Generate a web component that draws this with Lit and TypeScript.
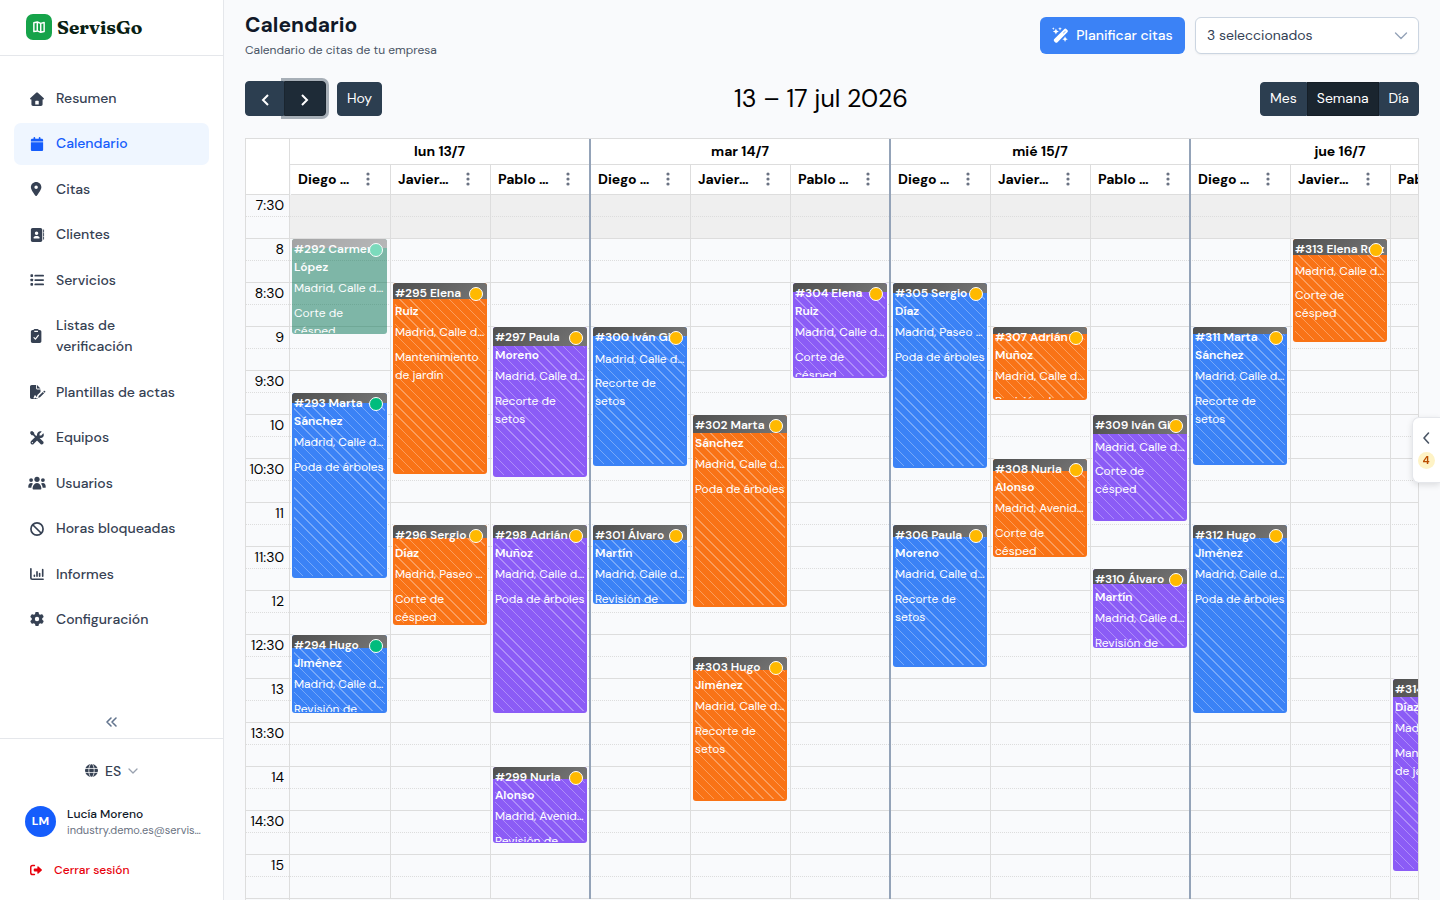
import { LitElement, html, css, svg } from "lit";
import { customElement, property } from "lit/decorators.js";
import { classMap } from "lit/directives/class-map.js";
import { styleMap } from "lit/directives/style-map.js";

const HOUSE = svg`<path d="M256 14c8 0 15 3 21 8l219 196c9 8 14 18 14 28 0 17-12 30-30 30h-20v172c0 36-24 60-60 60H112c-36 0-60-24-60-60V276H32c-18 0-30-13-30-30 0-10 5-20 14-28L235 22c6-5 13-8 21-8zM216 316c-14 0-24 10-24 24v118h128V340c0-14-10-24-24-24z" fill-rule="evenodd"/>`;
const CALENDAR = svg`<path d="M128 32v32H80c-26 0-48 22-48 48v48h448v-48c0-26-22-48-48-48h-48V32c0-18-14-32-32-32s-32 14-32 32v32H192V32c0-18-14-32-32-32s-32 14-32 32zM480 192H32v272c0 26 22 48 48 48h352c26 0 48-22 48-48z"/>`;
const PIN = svg`<path d="M247.7 499.2C299 435 416 279.4 416 192 416 86 330 0 224 0S32 86 32 192c0 87.4 117 243 168.3 307.2 12.3 15.3 35.1 15.3 47.4 0zM224 128a64 64 0 1 1 0 128 64 64 0 1 1 0-128z"/>`;
const BOOK = svg`<path d="M96 0C60.700 0 32 28.700 32 64v384c0 35.300 28.700 64 64 64h288c35.300 0 64-28.700 64-64V64c0-35.300-28.700-64-64-64zM208 288h64c44.200 0 80 35.800 80 80 0 8.800-7.200 16-16 16H144c-8.800 0-16-7.200-16-16 0-44.200 35.800-80 80-80zm-32-96a64 64 0 1 1 128 0 64 64 0 1 1-128 0z"/><path d="M496 72v80M496 200v80M496 328v80" fill="none" stroke="currentColor" stroke-width="32" stroke-linecap="round"/>`;
const LIST = svg`<rect x="16" y="48" width="96" height="96" rx="24"/><rect x="16" y="208" width="96" height="96" rx="24"/><rect x="16" y="368" width="96" height="96" rx="24"/><rect x="160" y="64" width="352" height="64" rx="32"/><rect x="160" y="224" width="352" height="64" rx="32"/><rect x="160" y="384" width="352" height="64" rx="32"/>`;
const CLIPBOARD = svg`<path fill-rule="evenodd" d="M96 32h32c8-20 24-32 44-32h104c20 0 36 12 44 32h32c36 0 64 28 64 64v352c0 36-28 64-64 64H96c-36 0-64-28-64-64V96c0-36 28-64 64-64zm60 32v32c0 9 7 16 16 16h104c9 0 16-7 16-16V64z"/><path d="M146 314l52 54 108-138" fill="none" stroke="#fff" stroke-width="44" stroke-linecap="round" stroke-linejoin="round"/>`;
const SIGN = svg`<path fill-rule="evenodd" d="M64 0h160v128c0 18 14 32 32 32h128v96L270 370l-18 60c-20 4-30-8-38-34-8-26-42-28-52-4l-32 72c-10 24 20 40 42 24l24-34c20 24 34 36 68 36l20-4-10 26H64c-36 0-64-28-64-64V64C0 28 28 0 64 0zm192 0l128 128H256z"/><path d="M300 470l18-66 150-150 48 48-150 150zM486 236l22-22c30-24 74 20 48 48l-22 22z"/>`;
const TOOLS = svg`<path d="M20 20l60-16 74 58v52l88 88-44 44-88-88H58L4 84z"/><path d="M300 262l52-8 138 138c32 60-38 126-96 96L256 350l6-50z"/><path d="M498 100c24 70-12 146-90 154l-58-2L140 462c-50 80-170-8-100-96l216-208c-8-96 60-162 156-148l12 14-74 74v62h62l74-74z"/><circle cx="88" cy="424" r="24" fill="#fff"/>`;
const USERS = svg`<circle cx="320" cy="120" r="96"/><circle cx="104" cy="150" r="70"/><circle cx="536" cy="150" r="70"/><path d="M160 470c0-100 56-214 160-214s160 114 160 214c0 18-10 26-28 26H188c-18 0-28-8-28-26zM0 400c0-80 42-140 104-140 28 0 52 8 70 22-34 36-58 92-62 150H24c-16 0-24-10-24-32zM640 400c0-80-42-140-104-140-28 0-52 8-70 22 34 36 58 92 62 150h88c16 0 24-10 24-32z"/>`;
const BAN = svg`<g fill="none" stroke="currentColor" stroke-width="62"><circle cx="256" cy="256" r="222"/><path d="M100 100l312 312"/></g>`;
const CHART = svg`<g fill="none" stroke="currentColor" stroke-width="60" stroke-linecap="round" stroke-linejoin="round"><path d="M32 64v336c0 28 20 48 48 48h400"/><path d="M160 300v40M256 180v160M352 240v100M464 96v244" /></g>`;
const GEAR = svg`<path d="M495.9 166.600c3.200 8.700 .5 18.400-6.400 24.600l-43.300 39.400c1.100 8.300 1.700 16.800 1.700 25.400s-.6 17.100-1.700 25.400l43.300 39.400c6.900 6.200 9.600 15.900 6.400 24.600c-4.400 11.900-9.700 23.300-15.800 34.300l-4.700 8.100c-6.600 11-14 21.400-22.100 31.200c-5.900 7.200-15.700 9.600-24.500 6.800l-55.700-17.700c-13.400 10.300-28.200 18.900-44 25.400l-12.500 57.100c-2 9.100-9 16.300-18.200 17.800c-13.800 2.300-28 3.500-42.500 3.500s-28.700-1.200-42.500-3.500c-9.200-1.500-16.200-8.700-18.200-17.800l-12.500-57.100c-15.800-6.500-30.600-15.100-44-25.400L83.100 425.900c-8.800 2.800-18.600 .3-24.500-6.800c-8.100-9.800-15.500-20.200-22.100-31.200l-4.700-8.100c-6.100-11-11.400-22.400-15.800-34.300c-3.200-8.700-.5-18.400 6.400-24.600l43.300-39.400C64.600 273.100 64 264.600 64 256s.6-17.100 1.700-25.400L22.400 191.200c-6.900-6.200-9.600-15.900-6.400-24.600c4.400-11.900 9.700-23.300 15.800-34.300l4.700-8.100c6.600-11 14-21.400 22.100-31.200c5.900-7.200 15.700-9.600 24.500-6.800l55.700 17.700c13.400-10.300 28.200-18.900 44-25.400l12.500-57.100c2-9.100 9-16.300 18.200-17.800C227.300 1.200 241.500 0 256 0s28.700 1.200 42.500 3.500c9.200 1.500 16.200 8.700 18.200 17.800l12.500 57.100c15.800 6.500 30.600 15.100 44 25.400l55.700-17.700c8.800-2.800 18.600-.3 24.500 6.800c8.100 9.800 15.500 20.200 22.100 31.200l4.700 8.100c6.100 11 11.400 22.400 15.800 34.300zM256 336a80 80 0 1 0 0-160 80 80 0 1 0 0 160z"/>`;
const GLOBE = svg`<circle cx="256" cy="256" r="256"/><g fill="none" stroke="#fff" stroke-width="30"><ellipse cx="256" cy="256" rx="106" ry="262"/><path d="M0 176h512M0 336h512"/></g>`;
const LOGOUT = svg`<path d="M190 64H110c-44 0-78 34-78 78v228c0 44 34 78 78 78h80" fill="none" stroke="currentColor" stroke-width="62" stroke-linecap="round"/><path d="M502 274L358 410c-18 16-44 4-44-20v-70H196c-20 0-36-16-36-36v-56c0-20 16-36 36-36h118v-70c0-24 26-36 44-20l144 136c10 10 10 26 0 36z"/>`;
const WAND = svg`<path fill-rule="evenodd" d="M390 56c24-24 56-24 80 0l28 28c24 24 24 56 0 80L166 498c-24 24-56 24-80 0l-28-28c-24-24-24-56 0-80zm44 56L356 190l10 10 78-78z"/><path d="M112 36l30 70 70 30-70 30-30 70-30-70-70-30 70-30zM420 296l28 70 64 28-64 28-28 70-28-70-64-28 64-28zM250-16l18 44 44 18-44 18-18 44-18-44-44-18 44-18zM24-6l14 30 30 14-30 14-14 30-14-30-30-14 30-14z"/>`;

type Tone = "blue" | "orange" | "violet" | "done";
interface Visit {
  id: number;
  who: string[];
  place: string;
  job: string[];
  tone: Tone;
  start: number;
  length: number;
  travel: number;
  confirmed?: boolean;
}

const DAY_START = 450;
const DAY_END = 930;
const CALLE = "Madrid, Calle d…";
const PASEO = "Madrid, Paseo …";
const AVENIDA = "Madrid, Avenid…";

const visit = (
  id: number, who: string, place: string, job: string, tone: Tone,
  start: number, length: number, travel: number, confirmed = false,
): Visit => ({ id, who: who.split("|"), place, job: job.split("|"), tone, start, length, travel, confirmed });

const DAYS: { label: string; columns: { name: string; visits: Visit[] }[] }[] = [
  {
    label: "lun 13/7",
    columns: [
      { name: "Diego …", visits: [
        visit(292, "Carmen|López", CALLE, "Corte de|césped", "done", 480, 65, 6, true),
        visit(293, "Marta|Sánchez", CALLE, "Poda de árboles", "blue", 585, 126, 7, true),
        visit(294, "Hugo|Jiménez", CALLE, "Revisión de|riego", "blue", 750, 53, 9, true),
      ] },
      { name: "Javier…", visits: [
        visit(295, "Elena|Ruiz", CALLE, "Mantenimiento|de jardín", "orange", 510, 130, 11),
        visit(296, "Sergio|Díaz", PASEO, "Corte de|césped", "orange", 675, 68, 9),
      ] },
      { name: "Pablo …", visits: [
        visit(297, "Paula|Moreno", CALLE, "Recorte de|setos", "violet", 540, 102, 13),
        visit(298, "Adrián|Muñoz", CALLE, "Poda de árboles", "violet", 675, 128, 9),
        visit(299, "Nuria|Alonso", AVENIDA, "Revisión de|riego", "violet", 840, 52, 8),
      ] },
    ],
  },
  {
    label: "mar 14/7",
    columns: [
      { name: "Diego …", visits: [
        visit(300, "Iván Gil", CALLE, "Recorte de|setos", "blue", 540, 95, 6),
        visit(301, "Álvaro|Martín", CALLE, "Revisión de|riego", "blue", 675, 54, 10),
      ] },
      { name: "Javier…", visits: [
        visit(302, "Marta|Sánchez", CALLE, "Poda de árboles", "orange", 600, 131, 12),
        visit(303, "Hugo|Jiménez", CALLE, "Recorte de|setos", "orange", 765, 98, 9),
      ] },
      { name: "Pablo …", visits: [
        visit(304, "Elena|Ruiz", CALLE, "Corte de|césped", "violet", 510, 65, 6),
      ] },
    ],
  },
  {
    label: "mié 15/7",
    columns: [
      { name: "Diego …", visits: [
        visit(305, "Sergio|Díaz", PASEO, "Poda de árboles", "blue", 510, 126, 7),
        visit(306, "Paula|Moreno", CALLE, "Recorte de|setos", "blue", 675, 97, 8),
      ] },
      { name: "Javier…", visits: [
        visit(307, "Adrián|Muñoz", CALLE, "Revisión de|riego", "orange", 540, 50, 5),
        visit(308, "Nuria|Alonso", AVENIDA, "Corte de|césped", "orange", 630, 67, 8),
      ] },
      { name: "Pablo …", visits: [
        visit(309, "Iván Gil", CALLE, "Corte de|césped", "violet", 600, 72, 13),
        visit(310, "Álvaro|Martín", CALLE, "Revisión de|riego", "violet", 705, 54, 10),
      ] },
    ],
  },
  {
    label: "jue 16/7",
    columns: [
      { name: "Diego …", visits: [
        visit(311, "Marta|Sánchez", CALLE, "Recorte de|setos", "blue", 540, 94, 5),
        visit(312, "Hugo|Jiménez", CALLE, "Poda de árboles", "blue", 675, 128, 9),
      ] },
      { name: "Javier…", visits: [
        visit(313, "Elena Ruiz", CALLE, "Corte de|césped", "orange", 480, 70, 11),
      ] },
      { name: "Pablo …", visits: [
        visit(314, "Sergio|Díaz", CALLE, "Mantenimiento|de jardín", "violet", 780, 131, 12),
      ] },
    ],
  },
];

const SLOTS = ["7:30", "8", "8:30", "9", "9:30", "10", "10:30", "11", "11:30", "12", "12:30", "13", "13:30", "14", "14:30", "15"];

const NAV = [
  { label: "Resumen", icon: HOUSE },
  { label: "Calendario", icon: CALENDAR, active: true },
  { label: "Citas", icon: PIN },
  { label: "Clientes", icon: BOOK },
  { label: "Servicios", icon: LIST },
  { label: "Listas de verificación", icon: CLIPBOARD },
  { label: "Plantillas de actas", icon: SIGN },
  { label: "Equipos", icon: TOOLS },
  { label: "Usuarios", icon: USERS, wide: true },
  { label: "Horas bloqueadas", icon: BAN },
  { label: "Informes", icon: CHART },
  { label: "Configuración", icon: GEAR },
];

const base = css`
  * { box-sizing: border-box; }
  button, select { font: inherit; letter-spacing: inherit; color: inherit; margin: 0; cursor: pointer; }
  svg { display: block; flex: none; overflow: visible; }
`;

@customElement("app-sidebar")
class AppSidebar extends LitElement {
  static styles = [base, css`
    :host { display: flex; flex-direction: column; width: 224px; flex: none; background: #fff; border-right: 1px solid #e5e7eb; color: #364153; }
    .brand { height: 56px; flex: none; display: flex; align-items: center; gap: 5px; padding: 0 26px 2px; border-bottom: 1px solid #e5e7eb; }
    .mark { width: 26px; height: 26px; border-radius: 7px; background: #16a34a; display: grid; place-items: center; }
    .word { font-family: "Fraunces", "Liberation Serif", serif; font-weight: 700; font-size: 19px; line-height: 26px; color: #0a1f14; }
    nav { flex: 1; min-height: 0; display: flex; flex-direction: column; justify-content: space-between; padding: 22px 14px 0; }
    .item { display: flex; align-items: center; gap: 10px; padding: 10px 14px 11px; border-radius: 7px; font-size: 14px; line-height: 21px; font-weight: 500; color: inherit; text-decoration: none; }
    .item.active { background: #eff6ff; color: #155dfc; }
    .slot { width: 18px; display: grid; place-items: center; flex: none; }
    .collapse { align-self: center; display: grid; place-items: center; width: 32px; height: 32px; margin-top: 65px; border: 0; background: none; color: #62748e; }
    .foot { border-top: 1px solid #e5e7eb; padding: 14px 0 15px; display: flex; flex-direction: column; }
    .lang { align-self: center; display: flex; align-items: center; gap: 7px; height: 35px; border: 0; background: none; font-size: 14px; font-weight: 500; }
    .user { display: flex; align-items: center; gap: 11px; margin: 14px 25px 0; height: 38px; }
    .avatar { width: 31px; height: 31px; border-radius: 50%; background: #155dfc; color: #fff; display: grid; place-items: center; font-size: 12px; font-weight: 700; flex: none; }
    .who { min-width: 0; }
    .name { font-size: 12px; line-height: 17px; font-weight: 500; color: #101828; }
    .mail { font-size: 11px; line-height: 14px; color: #6a7282; white-space: nowrap; }
    .logout { display: flex; align-items: center; gap: 11px; margin: 14px 0 0 29px; height: 31px; padding: 0; border: 0; background: none; color: #e7000b; font-size: 12px; font-weight: 500; }
    @media (max-width: 700px) { :host { width: 180px; } }
  `];

  render() {
    return html`
      <div class="brand">
        <span class="mark"><svg width="12" height="12" viewBox="0 0 14 14" fill="none" stroke="#fff" stroke-width="1.700" stroke-linejoin="round"><path d="M1 2l4-.8 4 1.600 4-1v10.400l-4 1-4-1.600-4 .8zM5 1.200v10.400M9 2.800v10.400"/></svg></span>
        <span class="word">ServisGo</span>
      </div>
      <nav>
        ${NAV.map((n) => html`
          <a href="#" class=${classMap({ item: true, active: !!n.active })}>
            <span class="slot"><svg width=${n.wide ? 18 : 14} height="14" viewBox=${n.wide ? "0 0 640 512" : "0 0 512 512"} fill="currentColor">${n.icon}</svg></span>
            <span>${n.label}</span>
          </a>`)}
      </nav>
      <button class="collapse" aria-label="Contraer menú"><svg width="12" height="12" viewBox="0 0 12 12" fill="none" stroke="currentColor" stroke-width="1.600" stroke-linecap="round" stroke-linejoin="round"><path d="M5 2L1 6l4 4M10 2L6 6l4 4"/></svg></button>
      <div class="foot">
        <button class="lang">
          <svg width="13" height="13" viewBox="0 0 512 512" fill="currentColor">${GLOBE}</svg>
          <span>ES</span>
          <svg width="10" height="10" viewBox="0 0 10 10" fill="none" stroke="#99a1af" stroke-width="1.300" stroke-linecap="round" stroke-linejoin="round"><path d="M1 3l4 4 4-4"/></svg>
        </button>
        <div class="user">
          <span class="avatar">LM</span>
          <div class="who">
            <div class="name">Lucía Moreno</div>
            <div class="mail">industry.demo.es@servis…</div>
          </div>
        </div>
        <button class="logout"><svg width="14" height="12" viewBox="0 0 512 512" fill="currentColor">${LOGOUT}</svg>Cerrar sesión</button>
      </div>
    `;
  }
}

@customElement("visit-card")
class VisitCard extends LitElement {
  @property({ attribute: false }) visit!: Visit;

  static styles = [base, css`
    :host { display: block; min-width: 0; min-height: 0; margin: 0 3px 0 2px; }
    .card { height: 100%; display: grid; grid-template: minmax(0, 1fr) / minmax(0, 1fr); overflow: hidden; border-radius: 3px; color: #fff; background: var(--tone); box-shadow: 0 0 0 1px #f9fafc; font-size: 12px; line-height: 18px; white-space: nowrap; position: relative; }
    .blue { --tone: #3b82f6; }
    .orange { --tone: #f97316; }
    .violet { --tone: #8b5cf6; }
    .done { --tone: #057454; opacity: 0.5; box-shadow: none; }
    .stripes, .travel, .copy { grid-area: 1 / 1; }
    .stripes { margin: 0 2px 2px; background: repeating-linear-gradient(45deg, transparent 0 6px, rgba(255, 255, 255, 0.3) 6px 7px); }
    .done .stripes { background: none; }
    .travel { align-self: start; background: linear-gradient(135deg, #4f4f4f, #777); }
    .copy { padding: 1px 2px 0; overflow: hidden; margin-bottom: 1px; }
    .title { font-weight: 600; }
    .place { margin-top: 3px; }
    .single .place { margin-top: 4px; }
    .job { margin-top: 7px; }
    .single .job { margin-top: 6px; }
    .dot { position: absolute; top: 4px; right: 4px; width: 14px; height: 14px; border-radius: 50%; border: 1px solid #fff; background: #ffb900; }
    .dot.confirmed { background: #00bc7d; }
  `];

  render() {
    const v = this.visit;
    return html`
      <article class=${classMap({ card: true, [v.tone]: true, single: v.who.length === 1 })}>
        <div class="stripes"></div>
        <div class="travel" style=${styleMap({ height: `${(v.travel / v.length) * 100}%` })}></div>
        <div class="copy">
          <div class="title">#${v.id} ${v.who.map((w, i) => (i ? html`<br>${w}` : w))}</div>
          <div class="place">${v.place}</div>
          <div class="job">${v.job.map((w, i) => (i ? html`<br>${w}` : w))}</div>
        </div>
        <span class=${classMap({ dot: true, confirmed: !!v.confirmed })}></span>
      </article>
    `;
  }
}

@customElement("week-calendar")
class WeekCalendar extends LitElement {
  static styles = [base, css`
    :host { display: flex; border: 1px solid #ddd; border-bottom: 0; font-size: 14px; color: #000; overflow: hidden; }
    .axis { width: 44px; flex: none; border-right: 1px solid #ddd; }
    .corner { height: 56px; background: #fff; border-bottom: 1px solid #ddd; }
    .hour { height: 44px; display: grid; grid-template-rows: 22px 22px; text-align: right; line-height: 20px; padding: 0; }
    .hour span { padding-right: 5px; border-bottom: 1px dotted #ddd; }
    .hour::after { content: ""; border-bottom: 1px solid #ddd; }
    .scroll { flex: 1; min-width: 0; overflow: hidden; }
    .inner { display: grid; width: max-content; }
    .lines, .days { grid-area: 1 / 1; }
    .lines { padding-top: 56px; }
    .line { height: 22px; border-bottom: 1px dotted #ddd; }
    .line:nth-child(even) { border-bottom-style: solid; }
    .line.closed { background: #efefef; }
    .days { display: flex; padding-left: 1px; }
    .day { width: 300px; border-right: 2px solid #94a3b8; }
    .date { height: 26px; display: grid; place-items: center; padding-bottom: 2px; background: #fff; border-bottom: 1px solid #ddd; font-weight: 700; }
    .day:first-child .date { margin-left: -1px; }
    .columns { display: grid; grid-template-columns: 100px 100px minmax(0, 1fr); }
    .column { border-right: 1px solid #ddd; min-width: 0; }
    .column:last-child { border-right: 0; }
    .person { height: 30px; display: flex; align-items: center; justify-content: space-between; padding: 0 15px 2px 7px; background: #fff; border-bottom: 1px solid #ddd; font-weight: 700; white-space: nowrap; }
    .column:last-child .person { padding-right: 14px; }
    .person button { border: 0; padding: 0; background: none; width: 14px; height: 14px; display: grid; place-items: center; color: #6a7282; }
    .track { display: grid; height: 704px; grid-template-columns: minmax(0, 1fr); }
    .column:last-child visit-card { margin-right: 2px; }
    .day:first-child .column:first-child visit-card { margin-left: 1px; }
  `];

  render() {
    const span = DAY_END - DAY_START;
    return html`
      <div class="axis">
        <div class="corner"></div>
        ${SLOTS.map((s) => html`<div class="hour"><span>${s}</span></div>`)}
      </div>
      <div class="scroll">
        <div class="inner">
          <div class="lines">
            ${SLOTS.map((_, i) => html`<div class=${classMap({ line: true, closed: i === 0 })}></div><div class=${classMap({ line: true, closed: i === 0 })}></div>`)}
          </div>
          <div class="days">
            ${DAYS.map((d) => html`
              <section class="day">
                <div class="date">${d.label}</div>
                <div class="columns">
                  ${d.columns.map((c) => html`
                    <div class="column">
                      <div class="person"><span>${c.name}</span><button aria-label="Opciones"><svg width="4" height="14" viewBox="0 0 4 14" fill="currentColor"><circle cx="2" cy="2" r="1.600"/><circle cx="2" cy="7" r="1.600"/><circle cx="2" cy="12" r="1.600"/></svg></button></div>
                      <div class="track" style=${styleMap({ gridTemplateRows: `repeat(${span}, minmax(0, 1fr))` })}>
                        ${c.visits.map((v) => html`<visit-card .visit=${v} style=${styleMap({ gridRow: `${v.start - DAY_START + 1} / span ${v.length}`, gridColumn: "1" })}></visit-card>`)}
                      </div>
                    </div>`)}
                </div>
              </section>`)}
          </div>
        </div>
      </div>
    `;
  }
}

@customElement("app-root")
class AppRoot extends LitElement {
  static styles = [base, css`
    :host { display: flex; height: 100vh; overflow: hidden; background: #f9fafc; font-family: "DM Sans", "Noto Sans", "Open Sans", sans-serif; font-size: 14px; color: #101828; }
    main { flex: 1; min-width: 0; display: flex; flex-direction: column; padding: 11px 21px 0; overflow: hidden; }
    .head { display: flex; justify-content: space-between; align-items: flex-start; flex: none; }
    h1 { margin: 0; font-size: 21px; line-height: 28px; font-weight: 700; }
    .sub { margin: 2px 0 0; font-size: 12px; line-height: 18px; color: #4a5565; }
    .tools { display: flex; gap: 10px; padding-top: 6px; }
    .plan { display: flex; align-items: center; justify-content: center; gap: 8px; height: 37px; width: 145px; padding: 0 0 2px; border: 0; border-radius: 6px; background: #3b82f6; color: #fff; font-weight: 500; white-space: nowrap; }
    .picker { display: grid; align-items: center; width: 224px; }
    .picker select, .picker svg { grid-area: 1 / 1; }
    .picker select { appearance: none; height: 37px; width: 100%; padding: 0 34px 2px 11px; border: 1px solid #cbd5e1; border-radius: 6px; background: #fff; color: #334155; box-shadow: 0 1px 2px rgba(18, 18, 23, 0.05); }
    .picker svg { justify-self: end; margin-right: 11px; pointer-events: none; }
    .bar { display: flex; justify-content: space-between; align-items: flex-end; height: 35px; margin: 22px 0; flex: none; }
    .group { display: flex; }
    .group button { height: 34px; border: 1px solid #2c3e50; background: #2c3e50; color: #fff; padding: 0 9px 2px; font-size: 14px; }
    .group button.arrow { width: 39px; height: 35px; padding: 3px 0 0; display: grid; place-items: center; border-radius: 4px 0 0 4px; }
    .group button.next { width: 42px; border-radius: 0 4px 4px 0; background: #1e2b37; border-color: #1a252f; box-shadow: 0 0 0 3px rgba(44, 62, 80, 0.4); }
    .group button.today { margin: 1px 0 0 11px; border-radius: 4px; width: 45px; }
    .group button.first { border-radius: 4px 0 0 4px; }
    .group button.on { background: #1a252f; border-color: #151e27; }
    .group button.last { border-radius: 0 4px 4px 0; }
    h2 { margin: 0; font-size: 25px; line-height: 34px; font-weight: 400; color: #000; white-space: nowrap; }
    week-calendar { flex: 1; min-height: 0; }
    .drawer { position: fixed; right: 0; top: 417px; width: 28px; height: 66px; padding: 0 1px 0 0; display: flex; flex-direction: column; align-items: center; justify-content: center; gap: 7px; border: 1px solid #e5e7eb; border-right: 0; border-radius: 7px 0 0 7px; background: #fff; color: #4a5565; box-shadow: 0 2px 6px rgba(0, 0, 0, 0.12); }
    .count { width: 17px; height: 17px; border-radius: 50%; background: #fef3c6; color: #bb4d00; font-size: 11px; line-height: 17px; font-weight: 700; text-align: center; }
  `];

  render() {
    return html`
      <app-sidebar></app-sidebar>
      <main>
        <header class="head">
          <div>
            <h1>Calendario</h1>
            <p class="sub">Calendario de citas de tu empresa</p>
          </div>
          <div class="tools">
            <button class="plan"><svg width="16" height="16" viewBox="-20 -16 540 540" fill="currentColor">${WAND}</svg>Planificar citas</button>
            <label class="picker">
              <select aria-label="Empleados"><option>3 seleccionados</option></select>
              <svg width="14" height="14" viewBox="0 0 14 14" fill="none" stroke="#94a3b8" stroke-width="1.400" stroke-linecap="round" stroke-linejoin="round"><path d="M1.500 4L7 9.500l5.500-5.500"/></svg>
            </label>
          </div>
        </header>
        <div class="bar">
          <div class="group">
            <button class="arrow" aria-label="Anterior"><svg width="8" height="12" viewBox="0 0 8 12" fill="none" stroke="currentColor" stroke-width="2"><path d="M7 1L2 6l5 5"/></svg></button>
            <button class="arrow next" aria-label="Siguiente"><svg width="8" height="12" viewBox="0 0 8 12" fill="none" stroke="currentColor" stroke-width="2"><path d="M1 1l5 5-5 5"/></svg></button>
            <button class="today">Hoy</button>
          </div>
          <h2>13 – 17 jul 2026</h2>
          <div class="group">
            <button class="first">Mes</button>
            <button class="on">Semana</button>
            <button class="last">Día</button>
          </div>
        </div>
        <week-calendar></week-calendar>
      </main>
      <button class="drawer" aria-label="Abrir panel: 4 pendientes">
        <svg width="14" height="14" viewBox="0 0 14 14" fill="none" stroke="currentColor" stroke-width="1.600" stroke-linecap="round" stroke-linejoin="round"><path d="M9.500 2L5 7l4.500 5"/></svg>
        <span class="count">4</span>
      </button>
    `;
  }
}
